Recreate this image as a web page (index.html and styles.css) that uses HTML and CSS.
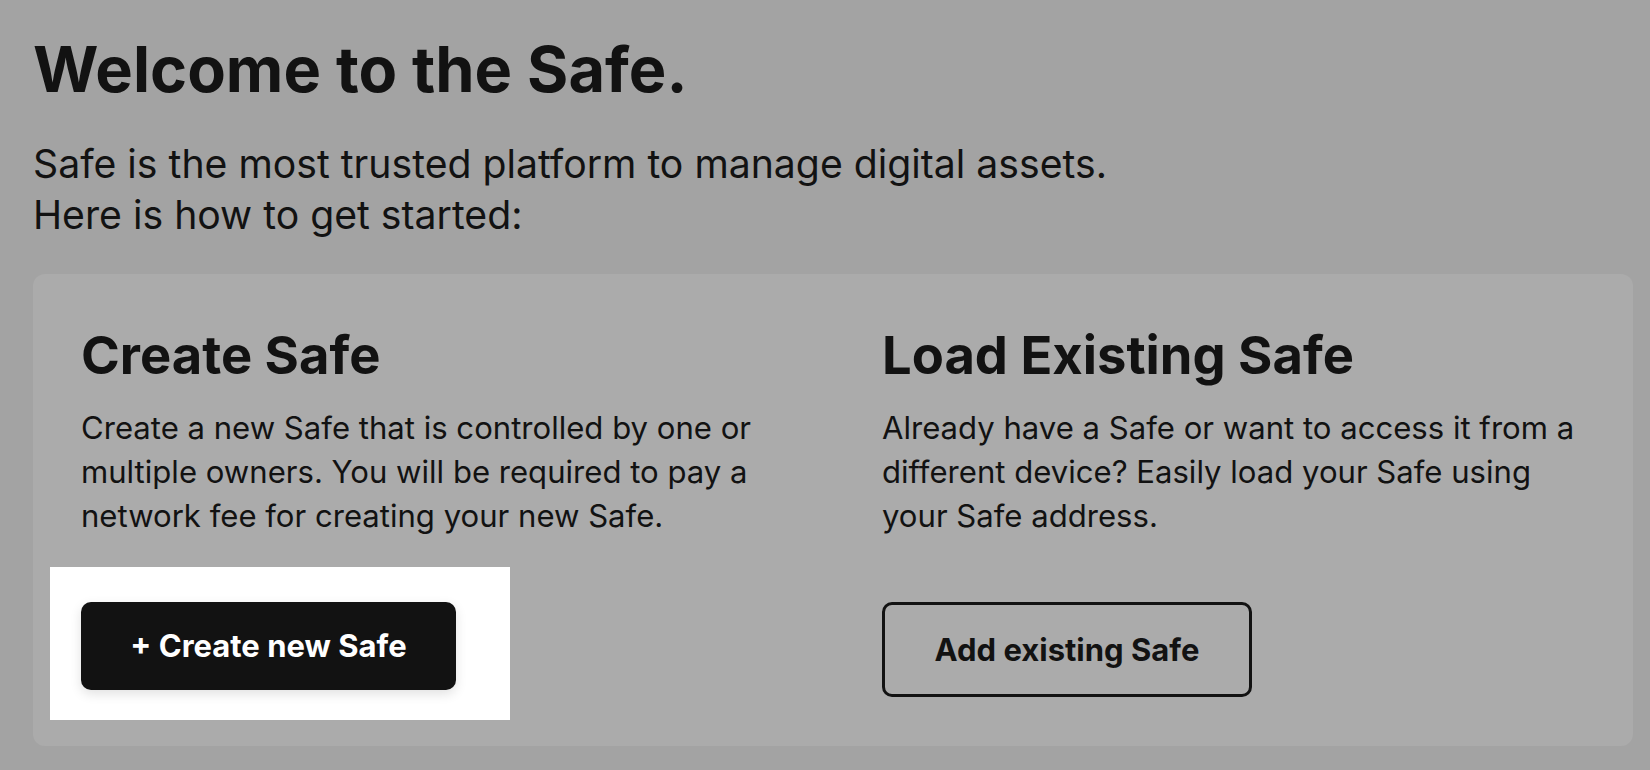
FILE: index.html
```html
<!DOCTYPE html>
<html lang="en">
<head>
<meta charset="utf-8">
<title>Welcome to the Safe</title>
<link rel="stylesheet" href="styles.css">
</head>
<body>
<main class="page">
  <h1 class="title">Welcome to the Safe.</h1>
  <p class="intro">Safe is the most trusted platform to manage digital assets.<br>Here is how to get started:</p>
  <section class="card">
    <div class="col">
      <h2 class="col-title">Create Safe</h2>
      <p class="col-text">Create a new Safe that is controlled by one or multiple owners. You will be required to pay a network fee for creating your new Safe.</p>
      <div class="actions">
        <div class="spotlight">
          <button class="btn btn-primary">+ Create new Safe</button>
        </div>
      </div>
    </div>
    <div class="col">
      <h2 class="col-title">Load Existing Safe</h2>
      <p class="col-text">Already have a Safe or want to access it from a different device? Easily load your Safe using your Safe address.</p>
      <div class="actions actions-plain">
        <button class="btn btn-outline">Add existing Safe</button>
      </div>
    </div>
  </section>
</main>
</body>
</html>
```
FILE: styles.css
```css
html {
  background: #a3a3a3;
}

body {
  margin: 0;
  font-family: "Inter", "Open Sans", sans-serif;
  color: #121212;
}

.page {
  padding: 32px 17px 0 33px;
}

.title {
  margin: 0;
  font-size: 63.1px;
  line-height: 75.6px;
  font-weight: 700;
}

.intro {
  margin: 30px 0 0;
  font-size: 39.2px;
  line-height: 51.5px;
  font-weight: 400;
}

.card {
  margin-top: 33px;
  background: #ababab;
  border-radius: 12px;
  padding: 50px 48px 26px 48px;
  display: grid;
  grid-template-columns: 1fr 1fr;
  column-gap: 98px;
}

.col-title {
  margin: 0;
  font-size: 52.5px;
  line-height: 63px;
  font-weight: 700;
}

.col-text {
  margin: 19px 0 0;
  font-size: 31.1px;
  line-height: 44px;
  font-weight: 400;
}

.actions {
  margin-top: 29px;
}

.actions-plain {
  padding-top: 35px;
}

.spotlight {
  background: #ffffff;
  width: fit-content;
  margin-left: -31px;
  padding: 35px 54px 30px 31px;
}

.btn {
  font-family: "Inter", "Open Sans", sans-serif;
  font-size: 31px;
  font-weight: 700;
  box-sizing: border-box;
  border-radius: 10px;
  cursor: pointer;
  display: flex;
  align-items: center;
  justify-content: center;
}

.btn-primary {
  width: 375px;
  height: 88px;
  background: #121212;
  color: #ffffff;
  border: none;
  box-shadow: 0 4px 12px rgba(0, 0, 0, 0.12);
}

.btn-outline {
  width: 370px;
  height: 95px;
  background: transparent;
  color: #121212;
  border: 3px solid #121212;
}
```
